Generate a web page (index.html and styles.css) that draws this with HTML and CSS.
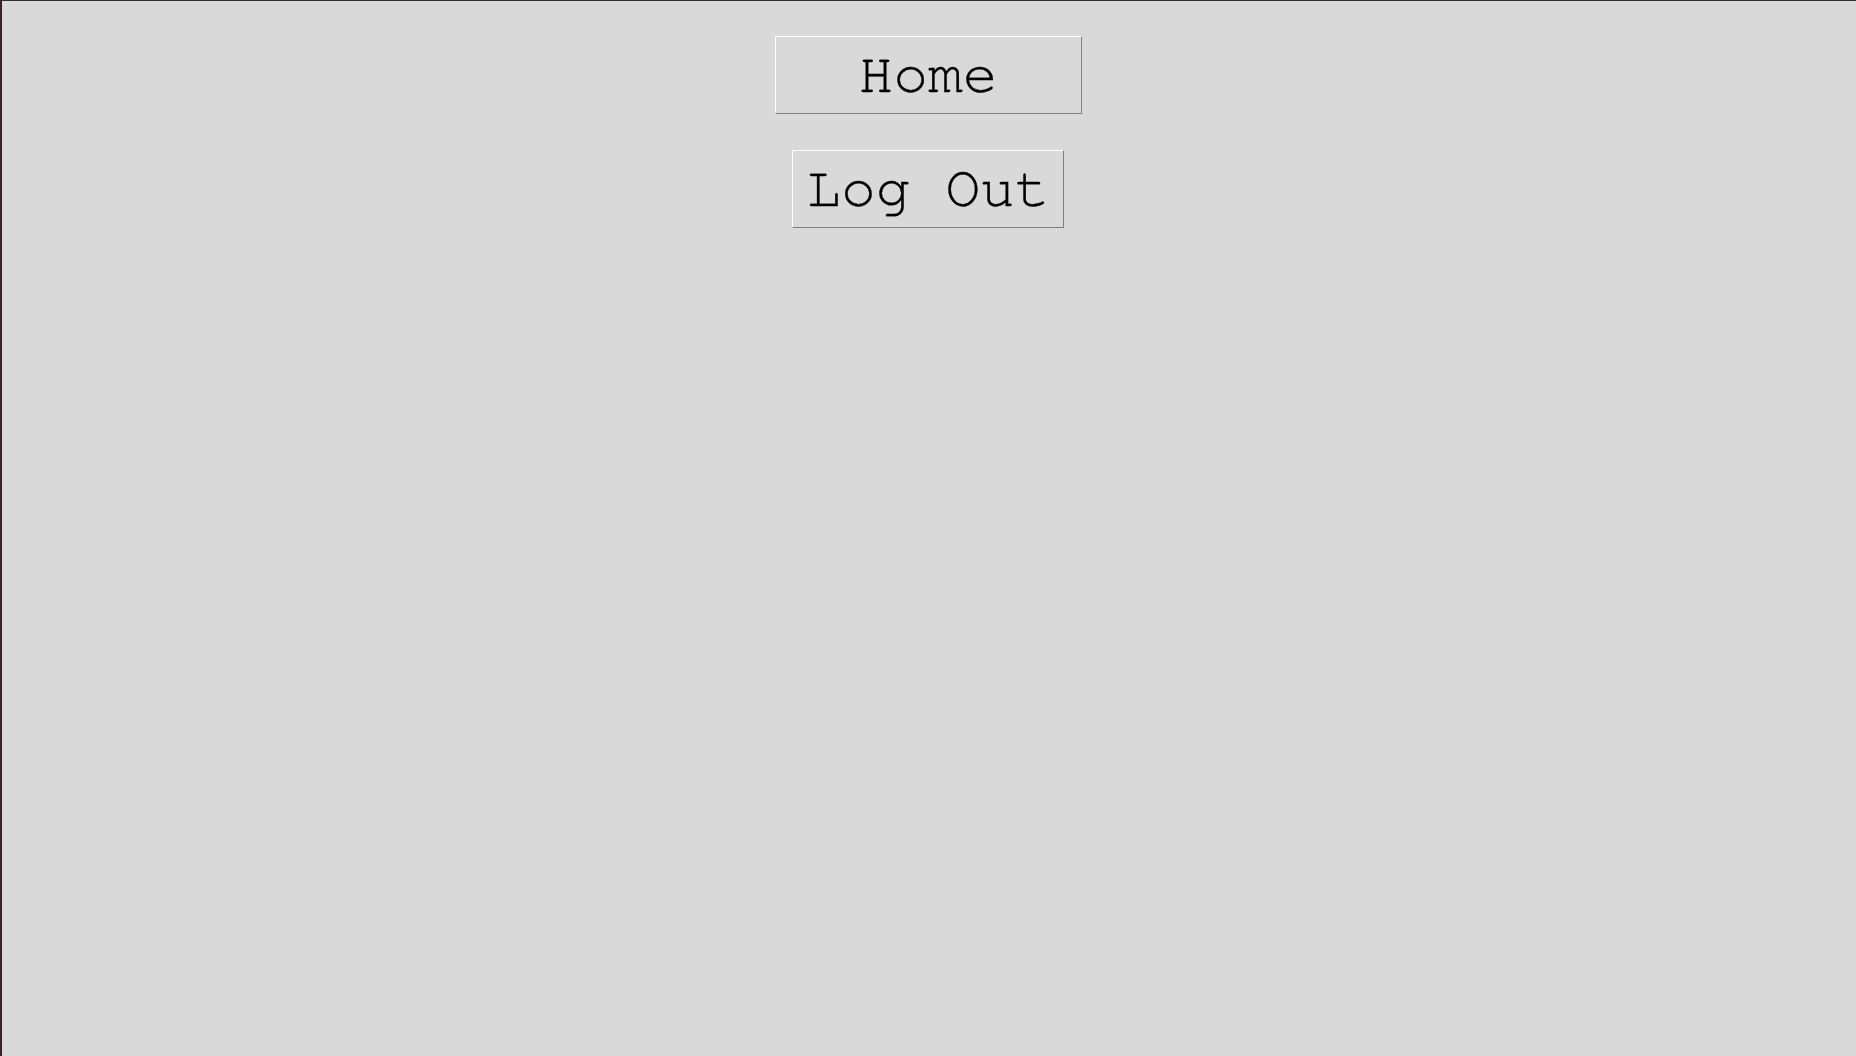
FILE: index.html
```html
<!DOCTYPE html>
<html>
<head>
<meta charset="utf-8">
<link rel="stylesheet" href="styles.css">
</head>
<body>
<div class="window">
  <div class="menu">
    <button class="btn btn-home">Home</button>
    <button class="btn btn-logout">Log Out</button>
  </div>
</div>
</body>
</html>
```
FILE: styles.css
```css
html, body {
  margin: 0;
  padding: 0;
  height: 100%;
}
body {
  background: #d9d9d9;
}
.window {
  box-sizing: border-box;
  height: 100%;
  border-top: 1px solid #2e2e2e;
  border-left: 2px solid #3a2222;
  background: #d9d9d9;
}
.menu {
  display: flex;
  flex-direction: column;
  align-items: center;
  gap: 36px;
  padding-top: 35px;
  margin-left: -2px;
}
.btn {
  box-sizing: border-box;
  height: 78px;
  background: #d9d9d9;
  border: 1px solid;
  border-color: #ffffff #808080 #808080 #ffffff;
  font-family: "Nimbus Mono PS", "FreeMono", "Courier New", "Liberation Mono", monospace;
  font-size: 58px;
  -webkit-text-stroke: 0.35px #000;
  color: #000;
  padding: 0;
  line-height: 1;
  display: flex;
  align-items: center;
  justify-content: center;
  white-space: pre;
}
.btn-home { width: 307px; }
.btn-logout { width: 272px; }
```
